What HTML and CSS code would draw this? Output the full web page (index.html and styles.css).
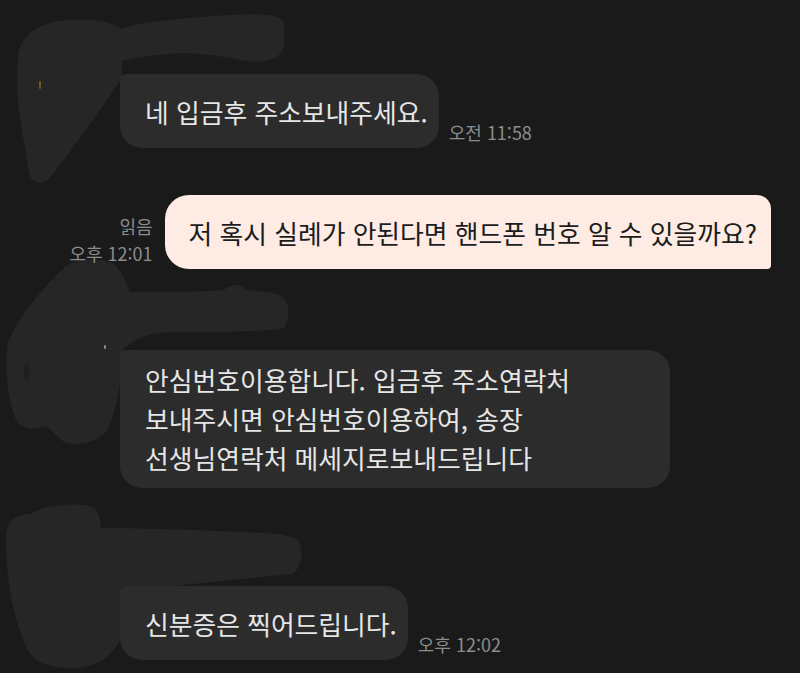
FILE: index.html
```html
<!DOCTYPE html>
<html lang="ko">
<head>
  <meta charset="UTF-8">
  <meta name="viewport" content="width=device-width, initial-scale=1">
  <link rel="stylesheet" href="styles.css">
</head>
<body>
  <svg class="scribbles" width="800" height="673" viewBox="0 0 800 673">
    <!-- redacted avatars and names -->
    <path d="M18,60 C18,35 40,21 70,20 C95,19 115,22 122,30 L122,78 C100,110 72,150 50,178 C42,186 31,184 29,172 L21,125 C17,100 16,80 18,60 Z"/>
    <path d="M116,30 C140,22 180,18 230,15 C262,13 283,14 284,24 L284,46 C281,61 262,64 240,60 C215,55 190,52 168,54 C148,56 130,58 116,63 Z"/>
    <rect class="speck" x="39" y="81" width="2" height="8" rx="1"/>

    <path d="M8,342 C18,318 42,288 66,266 C78,258 104,258 114,264 C122,272 126,282 130,292 C160,292 200,292 224,290 C230,284 242,283 246,290 C262,292 278,292 284,298 C290,306 290,320 284,328 C270,332 220,332 180,332 C160,332 146,334 136,340 L124,348 C122,370 120,395 110,425 C104,442 78,447 64,442 C56,436 52,430 46,426 C36,430 22,430 16,420 C8,400 4,370 8,342 Z"/>
    <ellipse class="shade" cx="27" cy="372" rx="3" ry="10"/>
    <rect class="glint" x="104" y="345" width="2" height="4" rx="1"/>

    <path d="M6,540 C6,522 14,514 30,514 C40,508 60,503 84,505 C96,506 100,512 101,528 C140,528 200,530 240,532 C270,533 296,534 300,544 C304,556 300,570 292,574 C250,578 190,584 140,590 L120,594 L120,640 C110,660 92,668 70,668 C48,668 32,662 26,646 C14,620 6,580 6,540 Z"/>
  </svg>

  <div class="chat">
    <div class="msg other first-msg">
      <div class="bubble">네 입금후 주소보내주세요.</div>
      <div class="meta"><span>오전 11:58</span></div>
    </div>

    <div class="msg mine second-msg">
      <div class="meta right"><span>읽음</span><span>오후 12:01</span></div>
      <div class="bubble">저 혹시 실례가 안된다면 핸드폰 번호 알 수 있을까요?</div>
    </div>

    <div class="msg other third-msg">
      <div class="bubble wide">안심번호이용합니다. 입금후 주소연락처<br>보내주시면 안심번호이용하여, 송장<br>선생님연락처 메세지로보내드립니다</div>
    </div>

    <div class="msg other fourth-msg">
      <div class="bubble">신분증은 찍어드립니다.</div>
      <div class="meta"><span>오후 12:02</span></div>
    </div>
  </div>
</body>
</html>
```

FILE: styles.css
```css
body
{
  margin: 0;
  background-color: #1a1a1a;
  font-family: "Noto Sans CJK KR", "Noto Sans", sans-serif;
  position: relative;
  height: 673px;
  overflow: hidden;
}
.scribbles
{
  position: absolute;
  top: 0;
  left: 0;
  z-index: 0;
}
.scribbles path
{
  fill: #262626;
}
.scribbles .speck
{
  fill: #6e5d1c;
}
.scribbles .shade
{
  fill: #1f1f1f;
}
.scribbles .glint
{
  fill: #8a8a8a;
}
.chat
{
  position: relative;
  z-index: 1;
  display: flex;
  flex-direction: column;
}
.msg
{
  display: flex;
  align-items: flex-end;
  gap: 10px;
}
.msg.other
{
  padding-left: 120px;
}
.msg.mine
{
  justify-content: flex-end;
  padding-right: 29px;
  gap: 12px;
}
.first-msg
{
  margin-top: 74px;
}
.second-msg
{
  margin-top: 47px;
}
.third-msg
{
  margin-top: 81px;
}
.fourth-msg
{
  margin-top: 98px;
}
.bubble
{
  box-sizing: border-box;
  min-height: 74px;
  display: flex;
  align-items: center;
  padding: 12px 11px 12px 25px;
  font-size: 25.8px;
  line-height: 39px;
  color: #e6e6e6;
  background-color: #2c2c2c;
  border-radius: 6px 22px 22px 22px;
  white-space: nowrap;
}
.bubble.wide
{
  width: 550px;
  display: block;
  padding-top: 10px;
  padding-bottom: 11px;
}
.mine .bubble
{
  color: #1c1c1c;
  background-color: #fdebe4;
  border-radius: 24px 14px 4px 24px;
  padding: 12px 14px 12px 24px;
}
.meta
{
  display: flex;
  flex-direction: column;
  font-size: 18px;
  line-height: 27px;
  color: #8c8c8c;
  padding-bottom: 2px;
  white-space: nowrap;
}
.meta.right
{
  align-items: flex-end;
}
```
